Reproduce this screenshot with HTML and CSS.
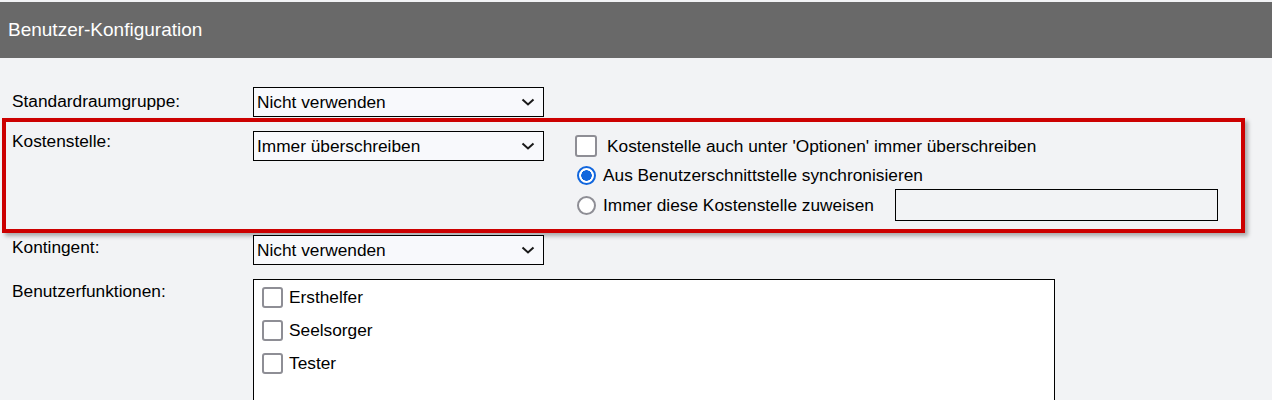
FILE: index.html
```html
<!DOCTYPE html>
<html lang="de">
  <head>
    <meta charset="UTF-8" />
    <meta name="viewport" content="width=device-width, initial-scale=1.0" />
    <title>Benutzer-Konfiguration</title>
    <link rel="stylesheet" href="styles.css">
  </head>
  <body>
    <div class="header">
      <h3>Benutzer-Konfiguration</h3>
    </div>

    <div class="form">
      <div class="row">
        <div class="label label-low">Standardraumgruppe:</div>
        <div class="select">
          <span>Nicht verwenden</span>
          <svg width="14" height="8" viewBox="0 0 14 8"><path d="M1.5 1.5 L7 6.5 L12.5 1.5" fill="none" stroke="#1a1a1a" stroke-width="2"/></svg>
        </div>
      </div>

      <!-- highlighted row -->
      <div class="row row-marked">
        <div class="label label-high">Kostenstelle:</div>
        <div class="select">
          <span>Immer überschreiben</span>
          <svg width="14" height="8" viewBox="0 0 14 8"><path d="M1.5 1.5 L7 6.5 L12.5 1.5" fill="none" stroke="#1a1a1a" stroke-width="2"/></svg>
        </div>
        <div class="options">
          <label class="opt opt-check">
            <input type="checkbox" class="box big" />
            <span>Kostenstelle auch unter 'Optionen' immer überschreiben</span>
          </label>
          <label class="opt opt-radio">
            <input type="radio" name="ks" class="radio" checked />
            <span>Aus Benutzerschnittstelle synchronisieren</span>
          </label>
          <label class="opt opt-last">
            <input type="radio" name="ks" class="radio" />
            <span>Immer diese Kostenstelle zuweisen</span>
            <input type="text" class="text-input" />
          </label>
        </div>
      </div>

      <div class="row">
        <div class="label">Kontingent:</div>
        <div class="select">
          <span>Nicht verwenden</span>
          <svg width="14" height="8" viewBox="0 0 14 8"><path d="M1.5 1.5 L7 6.5 L12.5 1.5" fill="none" stroke="#1a1a1a" stroke-width="2"/></svg>
        </div>
      </div>

      <div class="row">
        <div class="label">Benutzerfunktionen:</div>
        <div class="listbox">
          <label class="list-item"><input type="checkbox" class="box" /><span>Ersthelfer</span></label>
          <label class="list-item"><input type="checkbox" class="box" /><span>Seelsorger</span></label>
          <label class="list-item"><input type="checkbox" class="box" /><span>Tester</span></label>
        </div>
      </div>
    </div>
  </body>
</html>
```

FILE: styles.css
```css
* {
  margin: 0;
  padding: 0;
  box-sizing: border-box;
}
body {
  background-color: #f2f3f5;
  font-family: "Liberation Sans", Arial, sans-serif;
  color: black;
  padding-top: 2px;
  overflow: hidden;
}
.header {
  height: 56px;
  background-color: #696969;
  display: flex;
  align-items: center;
  padding-left: 8px;
}
.header h3 {
  color: white;
  font-weight: normal;
  font-size: 19px;
}

.form {
  display: flex;
  flex-direction: column;
  gap: 14px;
  padding-top: 29px;
}
.row {
  display: flex;
  align-items: flex-start;
  padding-left: 12px;
}
.row-marked {
  margin: -13px 27px -12px 2px;
  padding: 9px 0 8px 6px;
  border: 4px solid #cc0000;
  box-shadow: 3px 3px 4px rgba(0, 0, 0, 0.3);
}

.label {
  width: 241px;
  font-size: 17.3px;
  line-height: 20px;
  padding-top: 2px;
}
.label-low {
  padding-top: 4px;
}
.label-high {
  padding-top: 0;
}

.select {
  width: 291px;
  height: 30px;
  border: 1px solid black;
  background-color: #f8f9fc;
  display: flex;
  align-items: center;
  justify-content: space-between;
  padding: 0 8px 0 3px;
  font-size: 17.3px;
}

.options {
  display: flex;
  flex-direction: column;
  margin-left: 31px;
  font-size: 17.3px;
}
.opt {
  display: flex;
  align-items: center;
}
.opt-check {
  height: 30px;
  gap: 10px;
}
.opt-radio {
  height: 28px;
  gap: 7px;
  padding-left: 2px;
}
.opt-last {
  height: 32px;
  gap: 7px;
  padding-left: 2px;
}

.box {
  appearance: none;
  width: 21px;
  height: 21px;
  border: 2.5px solid #8e8e95;
  border-radius: 3px;
  background-color: white;
  flex-shrink: 0;
}
.box.big {
  width: 22px;
  height: 22px;
}

.radio {
  appearance: none;
  width: 19px;
  height: 19px;
  border: 2px solid #8e8e95;
  border-radius: 50%;
  background-color: white;
  flex-shrink: 0;
}
.radio:checked {
  border-color: #1166dd;
  background: radial-gradient(circle, #1166dd 0 5px, white 5.5px);
}

.text-input {
  width: 323px;
  height: 32px;
  margin-left: 14px;
  border: 1px solid black;
  background-color: #f2f3f5;
}

.listbox {
  width: 802px;
  height: 160px;
  border: 1px solid black;
  background-color: white;
  padding: 7px 0 0 8px;
  display: flex;
  flex-direction: column;
  gap: 12px;
}
.list-item {
  display: flex;
  align-items: center;
  gap: 6px;
  font-size: 17.3px;
}
```
